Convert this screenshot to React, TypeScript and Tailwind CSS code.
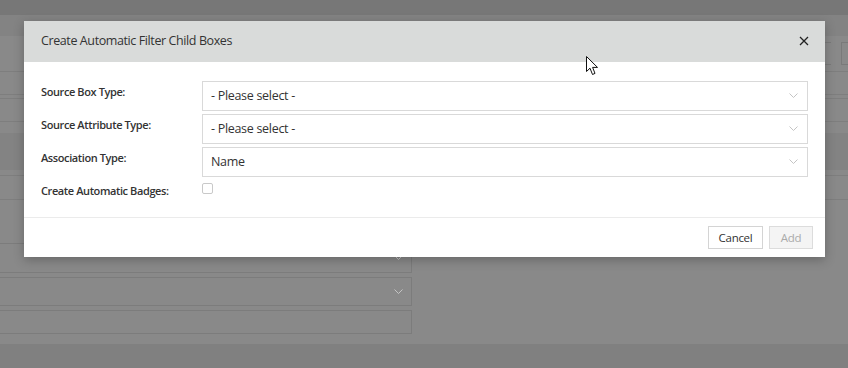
import React from 'react'

const font = { fontFamily: '"Open Sans", "Noto Sans", sans-serif' }

function Chevron() {
  return (
    <svg width="9" height="6" viewBox="0 0 9 6" className="shrink-0">
      <polyline points="0.5,0.5 4.5,4.5 8.5,0.5" fill="none" stroke="#c4c4c4" strokeWidth="1" />
    </svg>
  )
}

function Select({ value }: { value: string }) {
  return (
    <div className="flex h-[30px] flex-1 items-center justify-between border border-[#d9d9d9] bg-white pl-[8px] pr-[9px] text-[12.5px] tracking-[-0.3px] text-[#333]">
      <span>{value}</span>
      <Chevron />
    </div>
  )
}

function Label({ children }: { children: React.ReactNode }) {
  return (
    <div className="w-[161px] shrink-0 pt-[3px] text-[11px] font-semibold leading-[16px] tracking-[-0.4px] text-[#333]">
      {children}
    </div>
  )
}

function Row({ label, children }: { label: string; children: React.ReactNode }) {
  return (
    <div className="flex">
      <Label>{label}</Label>
      {children}
    </div>
  )
}

function Background() {
  return (
    <div className="flex h-[368px] w-[848px] flex-col bg-[#898989]">
      <div className="h-[15px] bg-[#777777]" />
      <div className="h-[21px] bg-[#838383]" />
      <div className="flex h-[36px] items-center justify-end gap-[10px] border-b border-[#7e7e7e]">
        <div className="h-[23px] w-[8px] border border-r-0 border-[#7a7a7a]" />
        <div className="h-[23px] w-[7px] border border-r-0 border-[#7a7a7a]" />
      </div>
      <div className="h-[23px] border-b border-[#7e7e7e]" />
      <div className="h-[4px] border-b border-[#7e7e7e]" />
      <div className="h-[23px] border-b border-[#7e7e7e]" />
      <div className="h-[11px]" />
      <div className="h-[37px] bg-[#838383]" />
      <div className="h-[6px] border-b border-[#7e7e7e]" />
      <div className="h-[24px] border-b border-[#7e7e7e]" />
      <div className="flex flex-col gap-[4px] pt-[43px]">
        <div className="flex h-[30px] w-[412px] items-center justify-end border border-l-0 border-[#7c7c7c] pr-[8px]">
          <Chevron />
        </div>
        <div className="flex h-[29px] w-[412px] items-center justify-end border border-l-0 border-[#7c7c7c] pr-[8px]">
          <Chevron />
        </div>
        <div className="h-[24px] w-[412px] border border-l-0 border-[#7c7c7c]" />
      </div>
      <div className="mt-auto h-[24px] bg-[#808080]" />
    </div>
  )
}

export default function App() {
  return (
    <div className="relative h-[368px] w-[848px] overflow-hidden" style={font}>
      <Background />

      <div className="absolute left-[24px] top-[21px] w-[801px] bg-white shadow-[0_3px_10px_rgba(0,0,0,0.25)]">
        <div className="flex h-[41px] items-center justify-between bg-[#d9dbda] pb-[1px] pl-[17px] pr-[16px]">
          <span className="text-[12.5px] tracking-[-0.4px] text-[#333]">Create Automatic Filter Child Boxes</span>
          <svg width="10" height="10" viewBox="0 0 10 10">
            <path d="M1 1 L9 9 M9 1 L1 9" stroke="#222" strokeWidth="1.3" />
          </svg>
        </div>

        <div className="flex flex-col gap-[3px] px-[17px] pb-[17px] pt-[19px]">
          <Row label="Source Box Type:">
            <Select value="- Please select -" />
          </Row>
          <Row label="Source Attribute Type:">
            <Select value="- Please select -" />
          </Row>
          <Row label="Association Type:">
            <Select value="Name" />
          </Row>
          <div className="flex h-[20px]">
            <Label>Create Automatic Badges:</Label>
            <div className="mt-[3px] h-[11px] w-[11px] rounded-[2px] border border-[#c9c9c9] bg-white" />
          </div>
        </div>

        <div className="flex justify-end gap-[6px] border-t border-[#ebebeb] pb-[8px] pr-[12px] pt-[8px]">
          <button className="h-[23px] w-[55px] border border-[#d4d4d4] bg-white text-[11.5px] tracking-[-0.3px] text-[#333]">
            Cancel
          </button>
          <button className="h-[23px] w-[44px] border border-[#dcdcdc] bg-[#f4f4f4] text-[11.5px] tracking-[-0.3px] text-[#aaa]">
            Add
          </button>
        </div>
      </div>

      <svg className="absolute left-[586px] top-[56px]" width="13" height="20" viewBox="0 0 13 20">
        <path d="M0.5 0.5 L0.5 15.5 L4 12.2 L6.5 18.5 L9 17.4 L6.6 11.4 L11.5 11.4 Z" fill="white" stroke="#111" strokeWidth="1" strokeLinejoin="round" />
      </svg>
    </div>
  )
}
